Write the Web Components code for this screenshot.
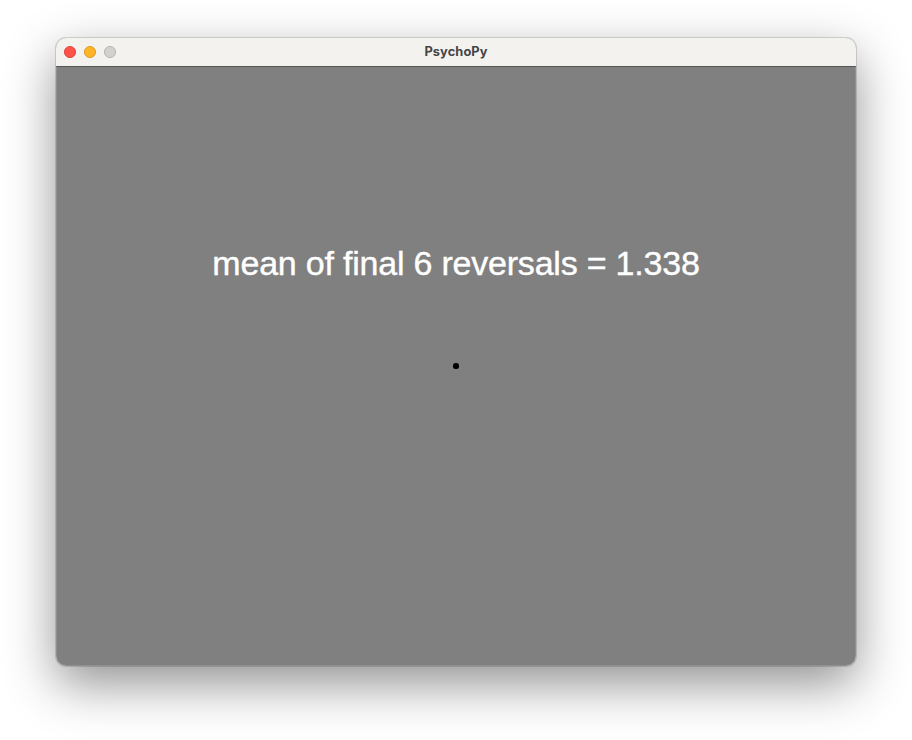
<!DOCTYPE html>
<html lang="en"><head><meta charset="utf-8"><title>PsychoPy</title>
<style>html,body{margin:0;background:#fff}body{width:912px;height:740px;overflow:hidden}</style></head>
<body>
<app-window><title-bar slot="bar">PsychoPy</title-bar><stimulus-view>mean of final 6 reversals = 1.338</stimulus-view></app-window>
<script>
class AppWindow extends HTMLElement{constructor(){super();this.attachShadow({mode:'open'}).innerHTML=`
<style>:host{display:block;box-sizing:border-box;height:740px;padding:38px 56px 74px}
.frame{height:628px;width:800px;border-radius:10px;overflow:hidden;display:flex;flex-direction:column;background:#808080}
.shadow{position:relative;border-radius:10px;box-shadow:0 0 0 1px rgba(0,0,0,.14),0 18px 50px rgba(0,0,0,.43)}
.shadow::after{content:"";position:absolute;inset:0;border-radius:10px;box-shadow:inset 0 0 0 1px rgba(255,255,255,.13);pointer-events:none}</style>
<div class="shadow"><div class="frame"><slot name="bar"></slot><slot></slot></div></div>`}}
customElements.define('app-window',AppWindow);
class TitleBar extends HTMLElement{constructor(){super();this.attachShadow({mode:'open'}).innerHTML=`
<style>:host{display:grid;grid-template-columns:60px 1fr 60px;align-items:center;box-sizing:border-box;height:29px;flex:none;background:#f3f2ee;border-bottom:1px solid #555;color:#454545;font:700 12.8px Inter,sans-serif}
svg{display:block}.title{text-align:center;line-height:28px;height:28px;letter-spacing:.1px}</style>
<svg width="60" height="28"><g stroke-width=".85"><circle cx="14" cy="14" r="5.6" fill="#ff5049" stroke="#d93c34"/><circle cx="34" cy="14" r="5.6" fill="#ffb428" stroke="#d99420"/><circle cx="54" cy="14" r="5.6" fill="#d2d1cd" stroke="#b0afab"/></g></svg><div class="title"><slot></slot></div>`}}
customElements.define('title-bar',TitleBar);
class StimulusView extends HTMLElement{constructor(){super();this.attachShadow({mode:'open'}).innerHTML=`
<style>:host{display:flex;flex-direction:column;align-items:center;flex:1;box-sizing:border-box;padding-top:176px;color:#fff;font:34px/40px "Liberation Sans",sans-serif}
.text{white-space:nowrap;letter-spacing:-.21px;-webkit-text-stroke:.4px #fff}.dot{width:6px;height:6px;border-radius:2.5px;background:#000;margin-top:80px}</style>
<div class="text"><slot></slot></div><div class="dot"></div>`}}
customElements.define('stimulus-view',StimulusView);
</script></body></html>
